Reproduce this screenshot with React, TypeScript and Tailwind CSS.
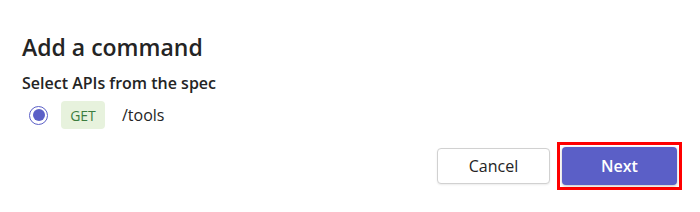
export default function App() {
  return (
    <div
      className="w-[700px] h-[212px] bg-white flex flex-col pl-[22px] pr-[18px] pt-[31px]"
      style={{ fontFamily: '"Open Sans", "Noto Sans", sans-serif' }}
    >
      <h1 className="text-[23px] leading-[32px] font-semibold text-[#242424]">Add a command</h1>
      <p className="mt-[9px] text-[16px] leading-[22px] font-semibold text-[#242424]">
        Select APIs from the spec
      </p>
      <div className="mt-[7px] flex items-center h-[28px]">
        <span className="ml-[7px] w-[19px] h-[19px] rounded-full border-[1.5px] border-[#5b5fc7] flex items-center justify-center">
          <span className="w-[12px] h-[12px] rounded-full bg-[#5b5fc7]" />
        </span>
        <span className="ml-[13px] h-[28px] w-[44px] rounded-[4px] bg-[#e7f2dd] text-[#3b7d3f] text-[14px] flex items-center justify-center">
          GET
        </span>
        <span className="ml-[17px] text-[16px] text-[#242424]">/tools</span>
      </div>
      <div className="mt-[13px] flex justify-end items-center gap-[7px]">
        <button
          type="button"
          className="w-[113px] h-[36px] rounded-[4px] border border-[#d1d1d1] bg-white text-[16px] text-[#242424] shadow-[0_1px_2px_rgba(0,0,0,0.08)]"
        >
          Cancel
        </button>
        <div className="border-[3px] border-[#ff0000] p-[2px]">
          <button
            type="button"
            className="w-[115px] h-[38px] rounded-[4px] bg-[#5b5fc7] text-white text-[16px] font-semibold shadow-[0_1px_3px_rgba(0,0,0,0.25)]"
          >
            Next
          </button>
        </div>
      </div>
    </div>
  )
}
